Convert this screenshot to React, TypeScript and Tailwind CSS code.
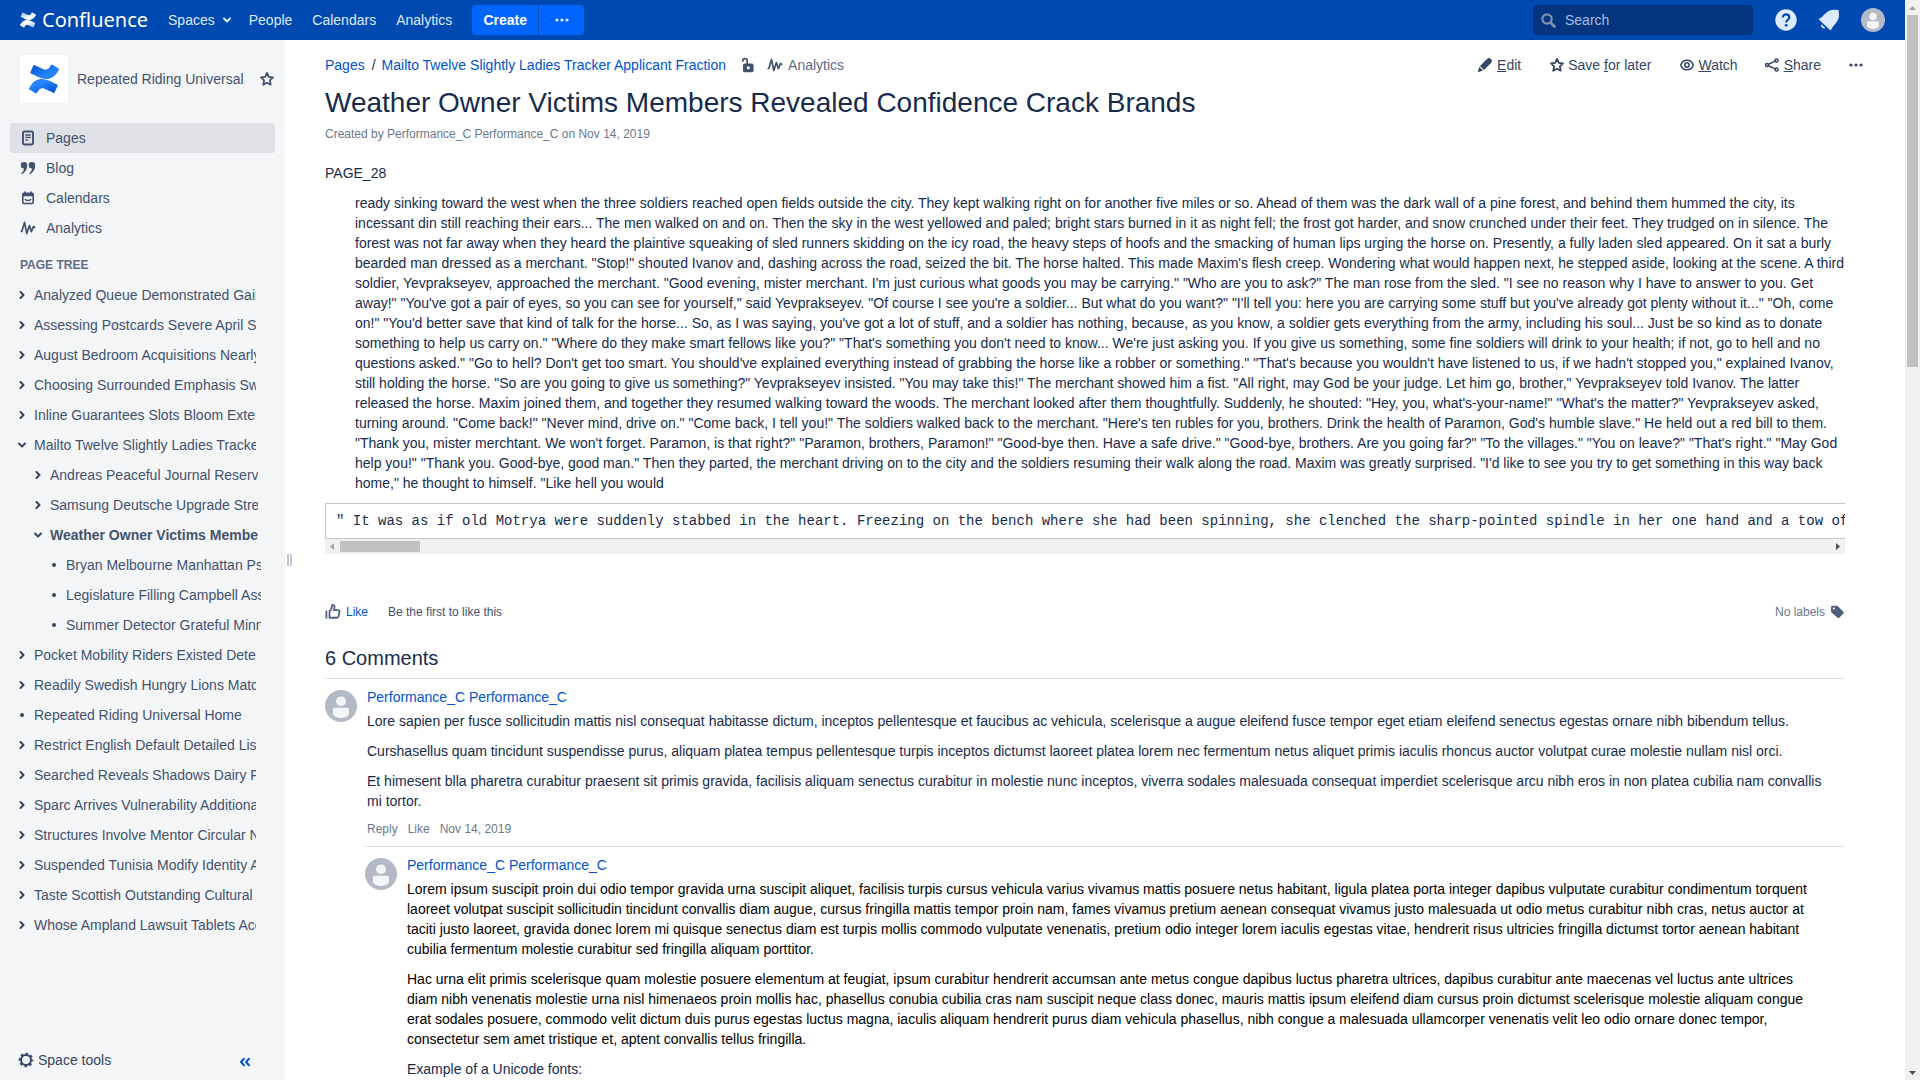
import type { ReactNode } from 'react';

const treeItems: { level: 0 | 1 | 2; kind: 'closed' | 'open' | 'leaf'; title: string; current?: boolean }[] = [
  { level: 0, kind: 'closed', title: 'Analyzed Queue Demonstrated Gain' },
  { level: 0, kind: 'closed', title: 'Assessing Postcards Severe April Sun' },
  { level: 0, kind: 'closed', title: 'August Bedroom Acquisitions Nearly' },
  { level: 0, kind: 'closed', title: 'Choosing Surrounded Emphasis Swift' },
  { level: 0, kind: 'closed', title: 'Inline Guarantees Slots Bloom Extent' },
  { level: 0, kind: 'open', title: 'Mailto Twelve Slightly Ladies Tracker Applicant Fraction' },
  { level: 1, kind: 'closed', title: 'Andreas Peaceful Journal Reserve' },
  { level: 1, kind: 'closed', title: 'Samsung Deutsche Upgrade Stress' },
  { level: 1, kind: 'open', title: 'Weather Owner Victims Members Revealed', current: true },
  { level: 2, kind: 'leaf', title: 'Bryan Melbourne Manhattan Psp' },
  { level: 2, kind: 'leaf', title: 'Legislature Filling Campbell Assist' },
  { level: 2, kind: 'leaf', title: 'Summer Detector Grateful Minnesota' },
  { level: 0, kind: 'closed', title: 'Pocket Mobility Riders Existed Detect' },
  { level: 0, kind: 'closed', title: 'Readily Swedish Hungry Lions Match' },
  { level: 0, kind: 'leaf', title: 'Repeated Riding Universal Home' },
  { level: 0, kind: 'closed', title: 'Restrict English Default Detailed List' },
  { level: 0, kind: 'closed', title: 'Searched Reveals Shadows Dairy Farm' },
  { level: 0, kind: 'closed', title: 'Sparc Arrives Vulnerability Additional' },
  { level: 0, kind: 'closed', title: 'Structures Involve Mentor Circular Note' },
  { level: 0, kind: 'closed', title: 'Suspended Tunisia Modify Identity Area' },
  { level: 0, kind: 'closed', title: 'Taste Scottish Outstanding Cultural Art' },
  { level: 0, kind: 'closed', title: 'Whose Ampland Lawsuit Tablets Access' },
];

const levelClass = ['pl-4 pr-[29px]', 'pl-8 pr-[27px]', 'pl-12 pr-6'];

const story = `ready sinking toward the west when the three soldiers reached open fields outside the city. They kept walking right on for another five miles or so. Ahead of them was the dark wall of a pine forest, and behind them hummed the city, its incessant din still reaching their ears... The men walked on and on. Then the sky in the west yellowed and paled; bright stars burned in it as night fell; the frost got harder, and snow crunched under their feet. They trudged on in silence. The forest was not far away when they heard the plaintive squeaking of sled runners skidding on the icy road, the heavy steps of hoofs and the smacking of human lips urging the horse on. Presently, a fully laden sled appeared. On it sat a burly bearded man dressed as a merchant. "Stop!" shouted Ivanov and, dashing across the road, seized the bit. The horse halted. This made Maxim's flesh creep. Wondering what would happen next, he stepped aside, looking at the scene. A third soldier, Yevprakseyev, approached the merchant. "Good evening, mister merchant. I'm just curious what goods you may be carrying." "Who are you to ask?" The man rose from the sled. "I see no reason why I have to answer to you. Get away!" "You've got a pair of eyes, so you can see for yourself," said Yevprakseyev. "Of course I see you're a soldier... But what do you want?" "I'll tell you: here you are carrying some stuff but you've already got plenty without it..." "Oh, come on!" "You'd better save that kind of talk for the horse... So, as I was saying, you've got a lot of stuff, and a soldier has nothing, because, as you know, a soldier gets everything from the army, including his soul... Just be so kind as to donate something to help us carry on." "Where do they make smart fellows like you?" "That's something you don't need to know... We're just asking you. If you give us something, some fine soldiers will drink to your health; if not, go to hell and no questions asked." "Go to hell? Don't get too smart. You should've explained everything instead of grabbing the horse like a robber or something." "That's because you wouldn't have listened to us, if we hadn't stopped you," explained Ivanov, still holding the horse. "So are you going to give us something?" Yevprakseyev insisted. "You may take this!" The merchant showed him a fist. "All right, may God be your judge. Let him go, brother," Yevprakseyev told Ivanov. The latter released the horse. Maxim joined them, and together they resumed walking toward the woods. The merchant looked after them thoughtfully. Suddenly, he shouted: "Hey, you, what's-your-name!" "What's the matter?" Yevprakseyev asked, turning around. "Come back!" "Never mind, drive on." "Come back, I tell you!" The soldiers walked back to the merchant. "Here's ten rubles for you, brothers. Drink the health of Paramon, God's humble slave." He held out a red bill to them. "Thank you, mister merchtant. We won't forget. Paramon, is that right?" "Paramon, brothers, Paramon!" "Good-bye then. Have a safe drive." "Good-bye, brothers. Are you going far?" "To the villages." "You on leave?" "That's right." "May God help you!" "Thank you. Good-bye, good man." Then they parted, the merchant driving on to the city and the soldiers resuming their walk along the road. Maxim was greatly surprised. "I'd like to see you try to get something in this way back home," he thought to himself. "Like hell you would`;

const code = `" It was as if old Motrya were suddenly stabbed in the heart. Freezing on the bench where she had been spinning, she clenched the sharp-pointed spindle in her one hand and a tow of flax in the other.`;

function ChevronRight() {
  return (
    <svg aria-hidden="true" width="8" height="10" viewBox="0 0 8 10" fill="none" stroke="currentColor" strokeWidth="2" strokeLinecap="round" strokeLinejoin="round">
      <path d="M2.5 2 5.5 5l-3 3" />
    </svg>
  );
}

function ChevronDown() {
  return (
    <svg aria-hidden="true" width="10" height="8" viewBox="0 0 10 8" fill="none" stroke="currentColor" strokeWidth="2" strokeLinecap="round" strokeLinejoin="round">
      <path d="M2 2.5 5 5.5l3-3" />
    </svg>
  );
}

function Dot() {
  return (
    <svg aria-hidden="true" width="6" height="6" viewBox="0 0 6 6">
      <circle cx="3" cy="3" r="2" fill="currentColor" />
    </svg>
  );
}

function Dots() {
  return (
    <svg aria-hidden="true" width="16" height="16" viewBox="0 0 16 16" fill="currentColor">
      <circle cx="3" cy="8" r="1.6" />
      <circle cx="8" cy="8" r="1.6" />
      <circle cx="13" cy="8" r="1.6" />
    </svg>
  );
}

function Star() {
  return (
    <svg aria-hidden="true" width="16" height="16" viewBox="0 0 16 16" fill="none" stroke="currentColor" strokeWidth="1.8" strokeLinejoin="round">
      <path d="M8 1.9l1.800 3.900 4.200.6-3.100 3 .8 4.300L8 11.700l-3.700 2 .8-4.300L2 6.400l4.200-.6z" />
    </svg>
  );
}

function Pulse() {
  return (
    <svg aria-hidden="true" width="16" height="16" viewBox="0 0 16 16" fill="none" stroke="currentColor" strokeWidth="1.7" strokeLinecap="round" strokeLinejoin="round">
      <path d="M1.200 11.500h.6L4.500 2.400l2.300 11.200 2.600-8 1.900 6 2.200-5.300 1.200 1" />
    </svg>
  );
}

function PageIcon() {
  return (
    <svg aria-hidden="true" width="16" height="16" viewBox="0 0 16 16" fill="none" stroke="currentColor" strokeWidth="1.9">
      <rect x="3" y="1.500" width="10" height="13" rx="1.500" />
      <path d="M5.300 5h5.400M5.300 7.400h5.400M5.300 9.800h3" strokeWidth="1.300" />
    </svg>
  );
}

function QuoteIcon() {
  return (
    <svg aria-hidden="true" width="16" height="16" viewBox="0 0 16 16" fill="currentColor">
      <path d="M4 2a3.200 3.200 0 0 1 3.200 3.300c0 4.100-2 7.300-5 8.700-.8.3-1.200-.5-.6-1 1.500-1.200 2.300-2.700 2.400-4.400A3.200 3.200 0 0 1 4 2z" />
      <path d="M12 2a3.200 3.200 0 0 1 3.200 3.300c0 4.100-2 7.300-5 8.700-.8.3-1.200-.5-.6-1 1.500-1.200 2.300-2.700 2.400-4.400A3.200 3.200 0 0 1 12 2z" />
    </svg>
  );
}

function CalendarIcon() {
  return (
    <svg aria-hidden="true" width="16" height="16" viewBox="0 0 16 16" fill="none" stroke="currentColor">
      <rect x="2.800" y="3.300" width="10.400" height="10.200" rx="1" strokeWidth="1.600" />
      <path d="M2.500 5h11" strokeWidth="2.600" />
      <path d="M4.800 1.500v2M11.200 1.500v2" strokeWidth="1.600" />
      <path d="M5 9c.8 1.900 5.200 1.900 6 0" strokeWidth="1.500" />
    </svg>
  );
}

function Avatar({ size }: { size: 'sm' | 'md' }) {
  return (
    <svg aria-hidden="true" className={size === 'sm' ? 'size-6 shrink-0' : 'size-8 shrink-0'} viewBox="0 0 32 32">
      <circle cx="16" cy="16" r="16" fill="#b3bac5" />
      <circle cx="16" cy="11.300" r="4.900" fill="#f4f5f7" />
      <path d="M8 19.300c0-1 .8-1.500 1.600-1.500h12.800c.9 0 1.600.6 1.600 1.500V23c0 3.400-4 5-8 5s-8-1.600-8-5z" fill="#f4f5f7" />
    </svg>
  );
}

function ConfluenceMark({ id, className, dark, light }: { id: string; className: string; dark: string; light: string }) {
  return (
    <svg aria-hidden="true" className={className} viewBox="0 0 256 246">
      <defs>
        <linearGradient id={id + '-low'} x1="99.140%" x2="33.860%" y1="112.700%" y2="37.760%">
          <stop offset="18%" stopColor={dark} />
          <stop offset="100%" stopColor={light} />
        </linearGradient>
        <linearGradient id={id + '-top'} x1=".93%" x2="66.180%" y1="-12.580%" y2="62.310%">
          <stop offset="18%" stopColor={dark} />
          <stop offset="100%" stopColor={light} />
        </linearGradient>
      </defs>
      <path
        fill={'url(#' + id + '-low)'}
        d="M9.260 187.330c-2.640 4.300-5.600 9.300-8.120 13.280a8.130 8.130 0 0 0 2.720 11.040l52.800 32.480a8.130 8.130 0 0 0 11.250-2.760c2.110-3.530 4.830-8.120 7.800-13.040 20.910-34.520 41.950-30.300 79.880-12.180l52.350 24.900a8.130 8.130 0 0 0 10.920-4.070l25.140-56.860a8.130 8.130 0 0 0-4.060-10.640c-11.050-5.200-33.020-15.550-52.800-25.100-71.150-34.560-131.620-32.320-177.880 42.950z"
      />
      <path
        fill={'url(#' + id + '-top)'}
        d="M246.740 58.420c2.640-4.300 5.600-9.300 8.120-13.280a8.130 8.130 0 0 0-2.720-11.050L199.340 1.620A8.130 8.130 0 0 0 187.810 4.300c-2.110 3.540-4.830 8.130-7.800 13.040-20.910 34.530-41.950 30.300-79.880 12.190L47.950 4.740a8.130 8.130 0 0 0-10.920 4.070L11.890 65.660a8.130 8.130 0 0 0 4.060 10.650c11.050 5.190 33.020 15.550 52.800 25.100 71.310 34.520 131.770 32.200 177.990-42.990z"
      />
    </svg>
  );
}

function NavRow({ icon, label, active }: { icon: ReactNode; label: string; active?: boolean }) {
  return (
    <a href="#" className={(active ? 'bg-[#dfe1e6] ' : '') + 'flex h-[30px] items-center gap-[10px] rounded-[3px] pl-[10px]'}>
      {icon}
      {label}
    </a>
  );
}

function Header() {
  return (
    <header className="flex h-10 shrink-0 items-center bg-[#0049b0] pr-5 pl-5 text-[#deebff]">
      <a href="#" aria-label="Confluence home" className="flex items-center gap-[6px]">
        <ConfluenceMark id="brand" className="size-4" dark="#9dbbe8" light="#ffffff" />
        <span className="font-['Noto_Sans'] text-[20px] leading-10 text-white">Confluence</span>
      </a>
      <nav className="ml-5 flex items-center">
        <a href="#" className="flex items-center gap-[7px]">
          Spaces
          <ChevronDown />
        </a>
        <a href="#" className="ml-[17px]">People</a>
        <a href="#" className="ml-5">Calendars</a>
        <a href="#" className="ml-5">Analytics</a>
      </nav>
      <div className="ml-5 flex gap-px">
        <button className="h-[30px] w-[66px] rounded-l-[3px] bg-[#0065ff] font-bold text-white">Create</button>
        <button aria-label="More create options" className="flex h-[30px] w-[45px] items-center justify-center rounded-r-[3px] bg-[#0065ff]">
          <Dots />
        </button>
      </div>
      <label className="mr-[22px] ml-auto flex h-[30px] w-[220px] items-center gap-[9px] rounded-[3px] bg-[#04357e] pl-2">
        <svg aria-hidden="true" width="15" height="15" viewBox="0 0 15 15" fill="none" stroke="#8093b3" strokeWidth="2.200">
          <circle cx="6" cy="6" r="4.700" />
          <path d="m9.500 9.500 4 4" strokeLinecap="round" strokeWidth="2.600" />
        </svg>
        <input aria-label="Search" placeholder="Search" className="w-40 bg-transparent outline-none placeholder:text-[#a5bde2]" />
      </label>
      <div className="flex items-center gap-[21px]">
        <button aria-label="Help">
          <svg aria-hidden="true" width="22" height="22" viewBox="0 0 22 22">
            <circle cx="11" cy="11" r="10.700" fill="#deebff" />
            <path d="M7.800 8.600C7.800 6.600 9.200 5.400 11 5.400s3.300 1.200 3.300 3c0 2.300-3.100 2.500-3.100 5" fill="none" stroke="#0049b0" strokeWidth="2.100" />
            <circle cx="11.200" cy="16.300" r="1.400" fill="#0049b0" />
          </svg>
        </button>
        <button aria-label="Notifications">
          <svg aria-hidden="true" width="22" height="22" viewBox="0 0 22 22" fill="#deebff">
            <path d="M1.500 9.500C5.500 7.400 7.500 3 11.800 1.400c2.200-.8 4.800-.8 6.800-.4.900-.7 2.500.1 2.200 1.600-.2.600-.2.600-.1 1 .5 2.200.4 4.700-.6 7-1.700 3.900-5 6.200-6.800 9.900-.4.800-.9.900-1.500.3L1.300 11c-.6-.6-.4-1.200.2-1.500z" />
            <path d="m3.400 15.200 4 3.800c-2.300 1.500-5.300-1.400-4-3.800z" />
          </svg>
        </button>
        <button aria-label="Your profile">
          <Avatar size="sm" />
        </button>
      </div>
    </header>
  );
}

function Sidebar() {
  return (
    <aside className="flex w-[285px] shrink-0 flex-col bg-[#f4f5f7] text-[#42526e]">
      <div className="flex items-center pt-[15px] pr-[10px] pl-5">
        <a href="#" className="flex items-center gap-[9px]">
          <span className="flex size-12 items-center justify-center rounded-[3px] bg-white">
            <ConfluenceMark id="space" className="size-[30px]" dark="#0052cc" light="#2684ff" />
          </span>
          Repeated Riding Universal
        </a>
        <button aria-label="Star this space" className="ml-auto">
          <Star />
        </button>
      </div>
      <nav className="mt-5 px-[10px]">
        <NavRow icon={<PageIcon />} label="Pages" active />
        <NavRow icon={<QuoteIcon />} label="Blog" />
        <NavRow icon={<CalendarIcon />} label="Calendars" />
        <NavRow icon={<Pulse />} label="Analytics" />
      </nav>
      <h2 className="mt-3 px-5 text-xs leading-5 font-bold text-[#5e6c84]">PAGE TREE</h2>
      <ul className="mt-[5px]">
        {treeItems.map((item) => (
          <li key={item.title} className={levelClass[item.level] + ' flex h-[30px] items-center gap-[6px]'}>
            <span className="flex w-3 shrink-0 justify-center text-[#344563]">
              {item.kind === 'closed' ? <ChevronRight /> : item.kind === 'open' ? <ChevronDown /> : <Dot />}
            </span>
            <a href="#" className={(item.current ? 'font-bold ' : '') + 'min-w-0 flex-1 overflow-hidden leading-5 whitespace-nowrap'}>
              {item.title}
            </a>
          </li>
        ))}
      </ul>
      <div className="mt-auto flex h-10 items-center pr-[34px] pl-[18px] text-[#344563]">
        <button className="flex items-center gap-1">
          <svg aria-hidden="true" width="16" height="16" viewBox="0 0 16 16" fill="none" stroke="currentColor">
            <circle cx="8" cy="8" r="5" strokeWidth="2" />
            <circle cx="8" cy="8" r="6.400" strokeWidth="1.900" strokeDasharray="2.510 2.510" strokeDashoffset="1.250" />
          </svg>
          Space tools
        </button>
        <button aria-label="Collapse sidebar" className="mt-1 ml-auto text-[#0052cc]">
          <svg aria-hidden="true" width="12" height="10" viewBox="0 0 12 10" fill="none" stroke="currentColor" strokeWidth="2" strokeLinecap="round" strokeLinejoin="round">
            <path d="M5 1.800 2 5l3 3.200M10 1.800 7 5l3 3.200" />
          </svg>
        </button>
      </div>
    </aside>
  );
}

function Toolbar() {
  return (
    <div className="ml-auto flex items-center text-[#344563]">
      <a href="#" className="flex items-center gap-1">
        <svg aria-hidden="true" width="16" height="16" viewBox="0 0 16 16" fill="currentColor">
          <path d="M10.200 1.700c.9-.9 2.300-1 3.200-.1l1 1c.8.800.7 2.200-.2 3.100L7 12.900 3 9zM2.300 9.900 6 13.500l-4.200 1.400c-.6.200-1-.3-.8-.8z" />
        </svg>
        <span><u>E</u>dit</span>
      </a>
      <a href="#" className="ml-7 flex items-center gap-[3px]">
        <Star />
        <span>Save <u>f</u>or later</span>
      </a>
      <a href="#" className="ml-7 flex items-center gap-[3px]">
        <svg aria-hidden="true" width="16" height="16" viewBox="0 0 16 16" fill="none" stroke="currentColor" strokeWidth="1.500">
          <path d="M1.700 8C2.800 4.800 5.300 3.200 8 3.200S13.200 4.800 14.300 8c-1.100 3.200-3.600 4.800-6.300 4.800S2.800 11.200 1.700 8z" />
          <circle cx="8" cy="8" r="2.200" />
        </svg>
        <span><u>W</u>atch</span>
      </a>
      <a href="#" className="ml-[26px] flex items-center gap-1">
        <svg aria-hidden="true" width="16" height="16" viewBox="0 0 16 16" fill="none" stroke="currentColor" strokeWidth="1.500">
          <circle cx="3" cy="8" r="1.500" />
          <circle cx="12.600" cy="3.400" r="1.500" />
          <circle cx="12.600" cy="12.600" r="1.500" />
          <path d="m4.400 7.300 6.800-3.200M4.400 8.700l6.800 3.200" />
        </svg>
        <span><u>S</u>hare</span>
      </a>
      <button aria-label="More actions" className="ml-[27px]">
        <Dots />
      </button>
    </div>
  );
}

function HorizontalScrollbar() {
  return (
    <div className="flex h-[15px] items-center justify-between bg-[#f1f1f1]">
      <svg aria-hidden="true" width="15" height="15" viewBox="0 0 15 15" fill="#a3a3a3">
        <path d="M9 4v7L5 7.500z" />
      </svg>
      <div className="h-[11px] flex-1">
        <div className="h-full w-20 bg-[#c1c1c1]" />
      </div>
      <svg aria-hidden="true" width="15" height="15" viewBox="0 0 15 15" fill="#505050">
        <path d="M6 4v7l4-3.500z" />
      </svg>
    </div>
  );
}

function VerticalScrollbar() {
  return (
    <div className="flex w-[15px] shrink-0 flex-col items-center bg-[#f1f1f1]">
      <svg aria-hidden="true" width="15" height="15" viewBox="0 0 15 15" fill="#a3a3a3">
        <path d="M4 10h7L7.500 6z" />
      </svg>
      <div className="w-[11px] flex-1">
        <div className="h-[352px] bg-[#c1c1c1]" />
      </div>
      <svg aria-hidden="true" width="15" height="15" viewBox="0 0 15 15" fill="#505050">
        <path d="M4 6h7l-3.500 4z" />
      </svg>
    </div>
  );
}

function Comment({ children }: { children: ReactNode }) {
  return (
    <article className="flex gap-[10px] border-t border-[#dfe1e6] pt-[11px]">
      <Avatar size="md" />
      <div className="min-w-0 flex-1 pr-5">
        <h3 className="-mt-1 leading-[22px]">
          <a href="#" className="text-[#0052cc]">Performance_C Performance_C</a>
        </h3>
        <div className="mt-[3px] flex flex-col gap-[10px]">{children}</div>
      </div>
    </article>
  );
}

export default function App() {
  return (
    <div className="flex h-screen overflow-hidden bg-white font-['Liberation_Sans',sans-serif] text-[14px] leading-5 text-[#172b4d]">
      <div className="flex min-w-0 flex-1 flex-col">
        <Header />
        <div className="flex min-h-0 flex-1">
          <Sidebar />
          <div aria-hidden="true" className="flex w-[10px] shrink-0 items-center gap-px pl-[2px]">
            <span className="h-3 w-[2px] bg-[#c1c7d0]" />
            <span className="h-3 w-[2px] bg-[#c1c7d0]" />
          </div>
          <main className="min-w-0 flex-1 overflow-hidden pl-[30px]">
            <div className="flex items-center pt-[15px] pr-[41px]">
              <nav aria-label="Breadcrumbs" className="flex items-center">
                <a href="#" className="text-[#0052cc]">Pages</a>
                <span className="mr-[6px] ml-[7px]">/</span>
                <a href="#" className="text-[#0052cc]">Mailto Twelve Slightly Ladies Tracker Applicant Fraction</a>
                <button aria-label="Restrictions" className="ml-[14px] text-[#42526e]">
                  <svg aria-hidden="true" width="16" height="16" viewBox="0 0 16 16" fill="none">
                    <path d="M2.800 4.800V3.900C2.800 2.600 3.700 1.600 5 1.600s2.200 1 2.200 2.300V7" stroke="currentColor" strokeWidth="1.700" />
                    <rect x="3" y="6.500" width="10.600" height="8.700" rx="1.600" fill="currentColor" />
                    <circle cx="8.300" cy="10.800" r="1.500" fill="#fff" />
                  </svg>
                </button>
                <a href="#" className="ml-[11px] flex items-center gap-[5px] text-[#5e6c84]">
                  <span className="text-[#42526e]"><Pulse /></span>
                  Analytics
                </a>
              </nav>
              <Toolbar />
            </div>
            <div className="pr-[60px]">
              <h1 className="mt-3 text-[28px] leading-8">Weather Owner Victims Members Revealed Confidence Crack Brands</h1>
              <p className="mt-[5px] text-xs leading-5 text-[#6b778c]">Created by Performance_C Performance_C on Nov 14, 2019</p>
              <p className="mt-[19px]">PAGE_28</p>
              <p className="mt-[10px] pl-[30px]">{story}</p>
              <pre className="mt-[10px] overflow-hidden border-y border-l border-[#c1c7d0] px-[10px] py-[7px] font-['Liberation_Mono',monospace] leading-5">{code}</pre>
              <HorizontalScrollbar />

              <div className="mt-12 flex items-center text-xs leading-5 text-[#42526e]">
                <button className="flex items-center gap-[5px] text-[#0052cc]">
                  <svg aria-hidden="true" width="16" height="16" viewBox="0 0 17 17" fill="none" stroke="#505f79" strokeWidth="1.900" strokeLinejoin="round">
                    <path d="M1.500 7v8.500" />
                    <path d="M4.800 14.600V7.600c2-1.100 2.400-3.300 2.500-5.200.1-2 2.600-1.800 2.800.3.100 1.500-.2 2.500-.7 3.700h4.300c1.300 0 1.900 1 1.700 2l-1 4.800c-.2.900-.8 1.400-1.700 1.400z" />
                  </svg>
                  Like
                </button>
                <span className="ml-5">Be the first to like this</span>
                <span className="ml-auto text-[#6b778c]">No labels</span>
                <button aria-label="Edit labels" className="ml-1 text-[#505f79]">
                  <svg aria-hidden="true" width="16" height="16" viewBox="0 0 16 16">
                    <path d="M2 3.500C2 2.400 2.700 1.700 3.700 1.700h4c.5 0 .9.200 1.200.5l5.300 5.300c.7.700.7 1.600 0 2.300l-3.700 3.800c-.7.700-1.600.7-2.300 0L2.600 8.400C2.200 8 2 7.600 2 7.100z" fill="currentColor" />
                    <circle cx="4.800" cy="4.500" r="1.100" fill="#fff" />
                  </svg>
                </button>
              </div>

              <section>
                <h2 className="mt-6 mb-2 text-xl leading-6">6 Comments</h2>
                <Comment>
                  <p>Lore sapien per fusce sollicitudin mattis nisl consequat habitasse dictum, inceptos pellentesque et faucibus ac vehicula, scelerisque a augue eleifend fusce tempor eget etiam eleifend senectus egestas ornare nibh bibendum tellus.</p>
                  <p>Curshasellus quam tincidunt suspendisse purus, aliquam platea tempus pellentesque turpis inceptos dictumst laoreet platea lorem nec fermentum netus aliquet primis iaculis rhoncus auctor volutpat curae molestie nullam nisl orci.</p>
                  <p>Et himesent blla pharetra curabitur praesent sit primis gravida, facilisis aliquam senectus curabitur in molestie nunc inceptos, viverra sodales malesuada consequat imperdiet scelerisque arcu nibh eros in non platea cubilia nam convallis mi tortor.</p>
                  <div className="mb-2 flex gap-[10px] text-xs leading-[17px] text-[#6b778c]">
                    <a href="#">Reply</a>
                    <a href="#">Like</a>
                    <a href="#">Nov 14, 2019</a>
                  </div>
                </Comment>
                <div className="pl-10">
                  <Comment>
                    <p className="text-black">Lorem ipsum suscipit proin dui odio tempor gravida urna suscipit aliquet, facilisis turpis cursus vehicula varius vivamus mattis posuere netus habitant, ligula platea porta integer dapibus vulputate curabitur condimentum torquent laoreet volutpat suscipit sollicitudin tincidunt convallis diam augue, cursus fringilla mattis tempor proin nam, fames vivamus pretium aenean consequat vivamus justo malesuada ut odio metus curabitur nibh cras, netus auctor at taciti justo laoreet, gravida donec lorem mi quisque senectus diam est turpis mollis commodo vulputate venenatis, pretium odio integer lorem iaculis egestas vitae, hendrerit risus ultricies fringilla dictumst tortor aenean habitant cubilia fermentum molestie curabitur sed fringilla aliquam porttitor.</p>
                    <p className="text-black">Hac urna elit primis scelerisque quam molestie posuere elementum at feugiat, ipsum curabitur hendrerit accumsan ante metus congue dapibus luctus pharetra ultrices, dapibus curabitur ante maecenas vel luctus ante ultrices diam nibh venenatis molestie urna nisl himenaeos proin mollis hac, phasellus conubia cubilia cras nam suscipit neque class donec, mauris mattis ipsum eleifend diam cursus proin dictumst scelerisque molestie aliquam congue erat sodales posuere, commodo velit dictum duis purus egestas luctus magna, iaculis aliquam hendrerit purus diam vehicula phasellus, nibh congue a malesuada ullamcorper venenatis velit leo odio ornare donec tempor, consectetur sem amet tristique et, aptent convallis tellus fringilla.</p>
                    <p>Example of a Unicode fonts:</p>
                  </Comment>
                </div>
              </section>
            </div>
          </main>
        </div>
      </div>
      <VerticalScrollbar />
    </div>
  );
}
